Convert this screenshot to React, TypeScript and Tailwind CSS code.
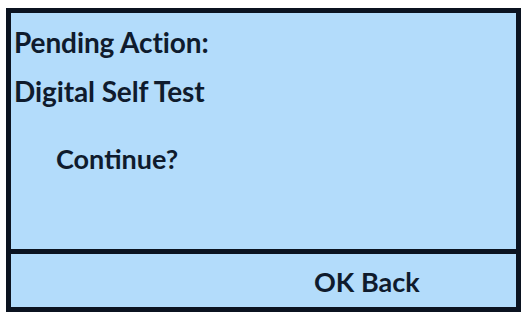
import React from "react";

const App: React.FC = () => {
  return (
    <div className="w-[526px] h-[315px] bg-white pt-[8px] pl-[6px]" style={{ fontFamily: "Lato, 'Open Sans', sans-serif" }}>
      <div className="w-[515px] h-[304px] border-[5px] border-[#0b1320] bg-[#b3dcfb] flex flex-col text-[#0f1b2d] font-bold">
        <div className="h-[236px] border-b-[5px] border-[#0b1320] box-content">
          <div className="pt-[5px] pl-[3px] text-[28px] leading-[49px] tracking-[-0.1px]">
            <div>Pending Action:</div>
            <div>Digital Self Test</div>
          </div>
          <div className="mt-[18px] pl-[45px] text-[27px] leading-[49px]">Continue?</div>
        </div>
        <div className="flex-1 flex items-center pl-[303px] text-[27px] leading-none pt-[2px]">
          OK Back
        </div>
      </div>
    </div>
  );
};

export default App;
